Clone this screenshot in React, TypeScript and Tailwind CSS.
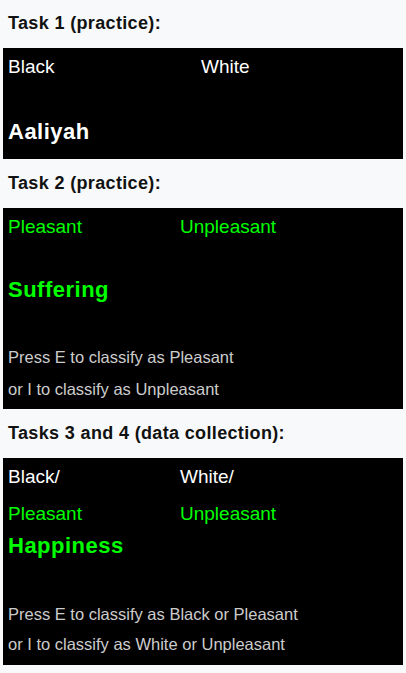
import React from "react";

const font = "font-['Liberation_Sans',Arial,sans-serif]";

function Heading({ children, first }: { children: React.ReactNode; first?: boolean }) {
  return (
    <h2
      className={`${first ? "pt-[11px]" : "pt-[12px]"} pb-[13px] pl-[5px] text-[18px] leading-[24px] font-bold tracking-[0.35px] text-[#111]`}
    >
      {children}
    </h2>
  );
}

function Labels({ left, right, col, green }: { left: React.ReactNode; right: React.ReactNode; col: string; green?: boolean }) {
  return (
    <div className={`grid ${col} text-[19px] leading-[38px] ${green ? "text-[#00ff00]" : "text-white"}`}>
      <div>{left}</div>
      <div>{right}</div>
    </div>
  );
}

function Stimulus({ children, green }: { children: React.ReactNode; green?: boolean }) {
  return (
    <div className={`text-[22px] leading-[28px] font-bold tracking-[0.5px] ${green ? "text-[#00ff00]" : "text-white"}`}>
      {children}
    </div>
  );
}

function Instructions({ lines, lh }: { lines: string[]; lh: string }) {
  return (
    <div className={`text-[16.5px] ${lh} text-[#cccccc]`}>
      {lines.map((l) => (
        <div key={l}>{l}</div>
      ))}
    </div>
  );
}

export default function App() {
  return (
    <div className={`min-h-[673px] w-[406px] bg-[#f8f9fa] px-[3px] ${font}`}>
      <Heading first>Task 1 (practice):</Heading>
      <div className="flex h-[111px] flex-col bg-black px-[5px]">
        <Labels left="Black" right="White" col="grid-cols-[193px_1fr]" />
        <div className="h-[32px]" />
        <Stimulus>Aaliyah</Stimulus>
      </div>

      <Heading>Task 2 (practice):</Heading>
      <div className="flex h-[201px] flex-col bg-black px-[5px]">
        <Labels left="Pleasant" right="Unpleasant" col="grid-cols-[172px_1fr]" green />
        <div className="h-[30px]" />
        <Stimulus green>Suffering</Stimulus>
        <div className="h-[37px]" />
        <Instructions
          lh="leading-[32px]"
          lines={["Press E to classify as Pleasant", "or I to classify as Unpleasant"]}
        />
      </div>

      <Heading>Tasks 3 and 4 (data collection):</Heading>
      <div className="flex h-[207px] flex-col bg-black px-[5px]">
        <div className="grid grid-cols-[172px_1fr] text-[19px] leading-[37px]">
          <div>
            <div className="text-white">Black/</div>
            <div className="text-[#00ff00]">Pleasant</div>
          </div>
          <div>
            <div className="text-white">White/</div>
            <div className="text-[#00ff00]">Unpleasant</div>
          </div>
        </div>
        <Stimulus green>Happiness</Stimulus>
        <div className="h-[39px]" />
        <Instructions
          lh="leading-[30px]"
          lines={["Press E to classify as Black or Pleasant", "or I to classify as White or Unpleasant"]}
        />
      </div>
      <div className="h-[9px]" />
    </div>
  );
}
